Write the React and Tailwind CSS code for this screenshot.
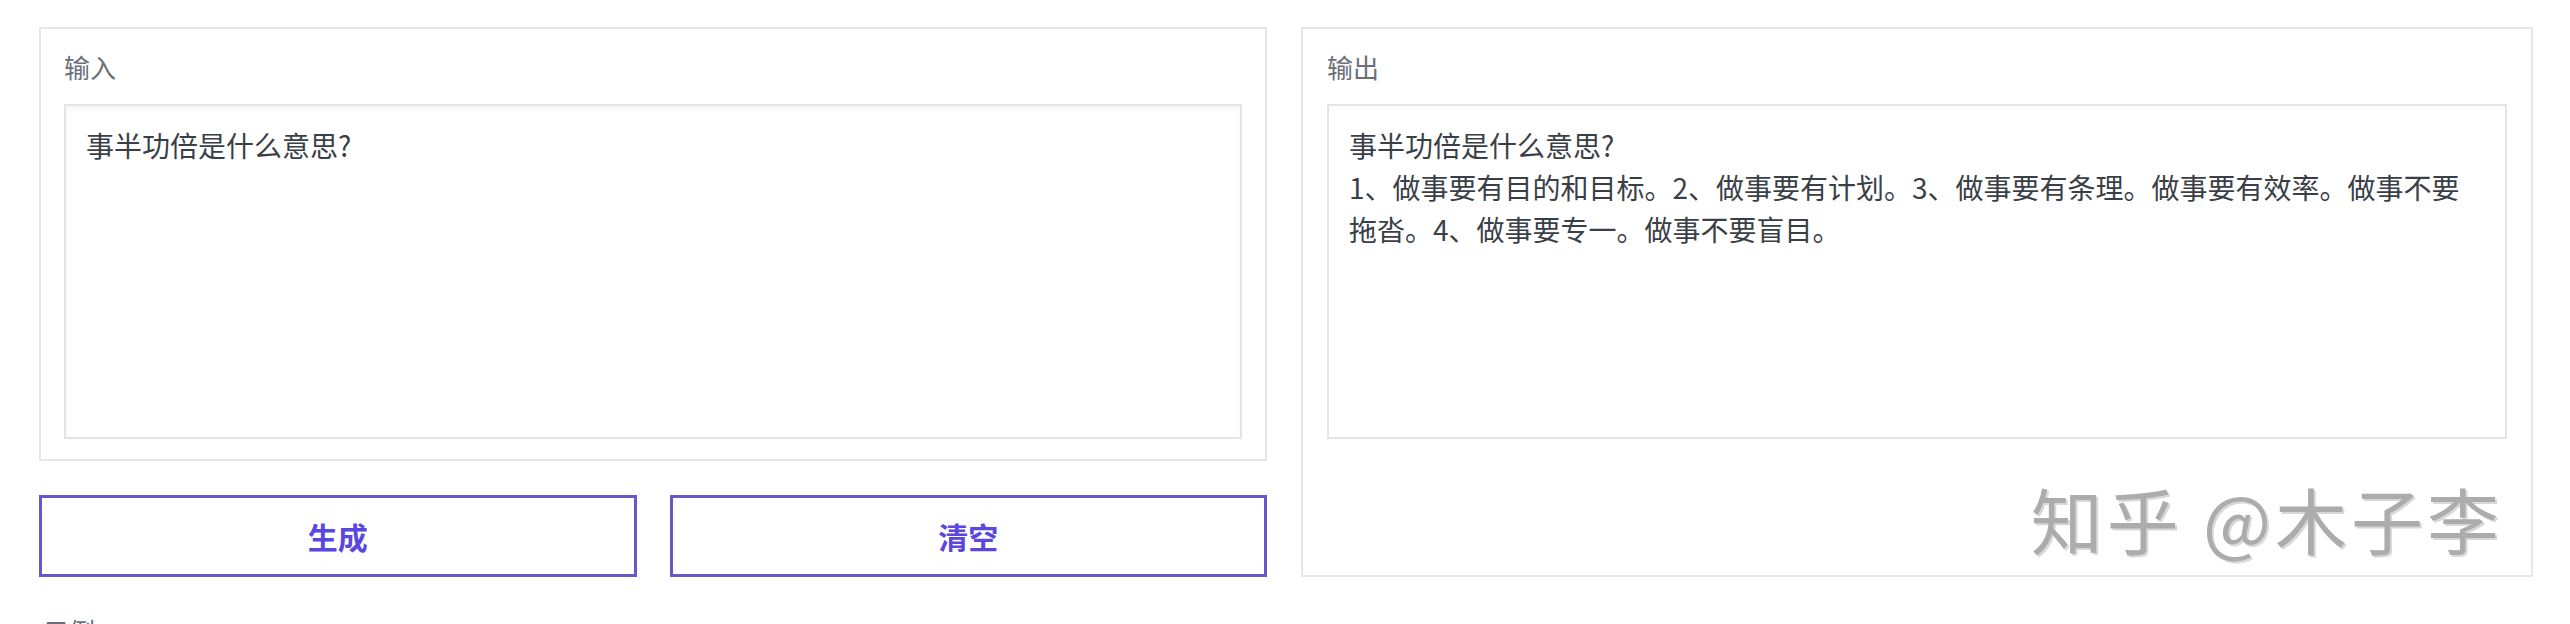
import React, { useState } from 'react'

const FONT = '"Noto Sans CJK SC", "Liberation Sans", sans-serif'

const outputLines = [
  '事半功倍是什么意思?',
  '1、做事要有目的和目标。2、做事要有计划。3、做事要有条理。做事要有效率。做事不要',
  '拖沓。4、做事要专一。做事不要盲目。',
]

export default function App() {
  const [input, setInput] = useState('事半功倍是什么意思?')

  return (
    <div className="w-full h-[624px] overflow-hidden bg-white pt-[27px] pl-[39px]" style={{ fontFamily: FONT }}>
      <div className="grid grid-cols-[1228px_1232px] gap-[34px]">
        {/* input column */}
        <div className="flex flex-col gap-[34px]">
          <div className="border-2 border-[#e6e6e8] px-[23px] pt-[20px] pb-[20px]">
            <div className="text-[26px] leading-[36px] text-[#6b6f78] mb-[19px]">输入</div>
            <textarea
              value={input}
              onChange={e => setInput(e.target.value)}
              className="block w-full h-[335px] resize-none border-2 border-[#e4e4e6] bg-white px-[20px] py-[18px] text-[28px] leading-[42px] text-[#3a3f47] outline-none shadow-[inset_0_3px_4px_rgba(0,0,0,0.035)]"
            />
          </div>
          <div className="grid grid-cols-2 gap-[33px]">
            <button className="h-[82px] border-[3px] border-[#6658c9] bg-white text-[30px] font-bold text-[#5a47df]">生成</button>
            <button onClick={() => setInput('')} className="h-[82px] border-[3px] border-[#6658c9] bg-white text-[30px] font-bold text-[#5a47df]">清空</button>
          </div>
        </div>

        {/* output column */}
        <div className="relative h-[550px] border-2 border-[#e6e6e8] px-[24px] pt-[20px]">
          <div className="text-[26px] leading-[36px] text-[#6b6f78] mb-[19px]">输出</div>
          <div className="h-[335px] border-2 border-[#e4e4e6] bg-white px-[20px] py-[18px] text-[28px] leading-[42px] text-[#3a3f47]">
            {outputLines.map((l, i) => <div key={i}>{l}</div>)}
          </div>
          <div className="absolute right-[28px] bottom-[12px] text-[72px] leading-[90px] tracking-[4px] text-[#acacac] [text-shadow:2px_2px_0_#d8d8d8]">
            知乎 @木子李
          </div>
        </div>
      </div>

      <div className="mt-[36px] pl-[4px] text-[26px] leading-[36px] text-[#6b6f78]">示例</div>
    </div>
  )
}
